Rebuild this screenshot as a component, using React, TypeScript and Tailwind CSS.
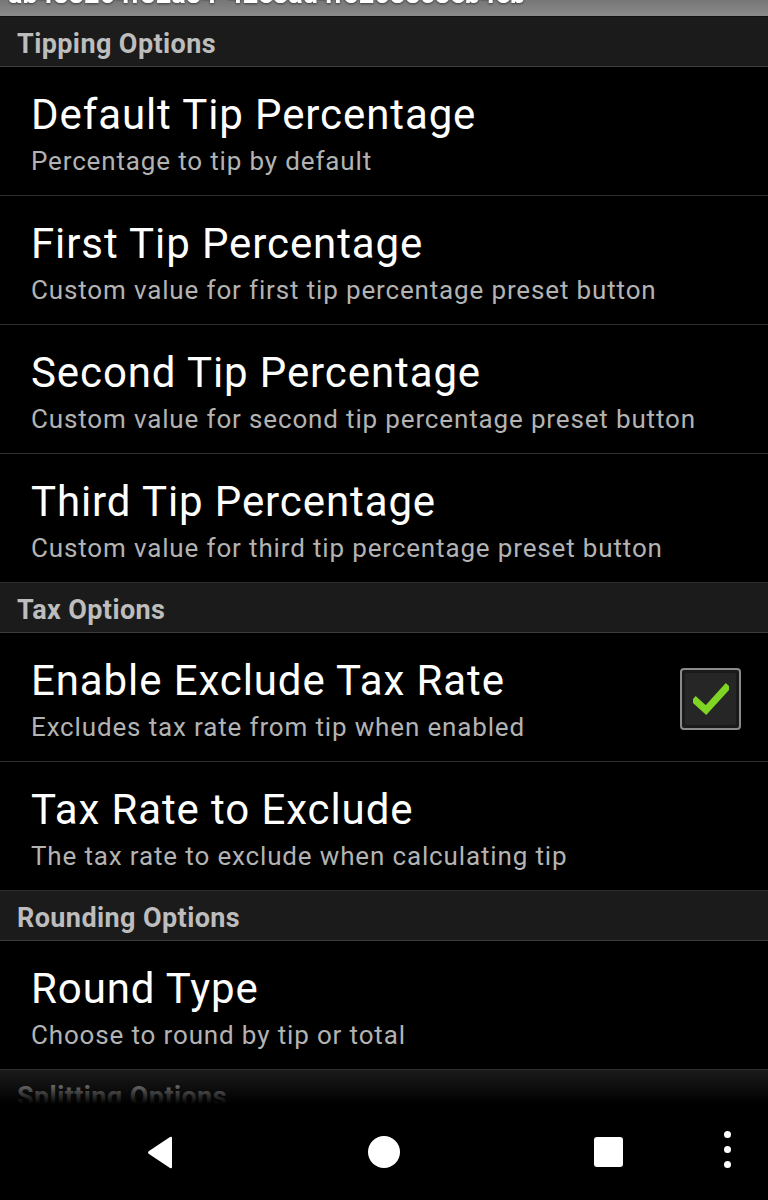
import React from "react";

type Pref = { title: string; summary: string; checked?: boolean };
type Section = { header: string; items: Pref[] };

const sections: Section[] = [
  {
    header: "Tipping Options",
    items: [
      { title: "Default Tip Percentage", summary: "Percentage to tip by default" },
      { title: "First Tip Percentage", summary: "Custom value for first tip percentage preset button" },
      { title: "Second Tip Percentage", summary: "Custom value for second tip percentage preset button" },
      { title: "Third Tip Percentage", summary: "Custom value for third tip percentage preset button" },
    ],
  },
  {
    header: "Tax Options",
    items: [
      { title: "Enable Exclude Tax Rate", summary: "Excludes tax rate from tip when enabled", checked: true },
      { title: "Tax Rate to Exclude", summary: "The tax rate to exclude when calculating tip" },
    ],
  },
  {
    header: "Rounding Options",
    items: [{ title: "Round Type", summary: "Choose to round by tip or total" }],
  },
  { header: "Splitting Options", items: [] },
];

const font = { fontFamily: "Roboto, 'Noto Sans', sans-serif" };

function CheckBox() {
  return (
    <div className="w-[61px] h-[62px] rounded-[4px] border-2 border-[#8a8a8a] bg-[#1a1a1a] p-[3px] shrink-0">
      <div className="w-full h-full rounded-[2px] bg-[#262626] flex items-center justify-center">
        <svg width="36" height="32" viewBox="0 0 36 32">
          <path d="M3 18 L13 27 L33 5" fill="none" stroke="#7fd424" strokeWidth="7" strokeLinecap="square" />
        </svg>
      </div>
    </div>
  );
}

function SectionHeader({ label }: { label: string }) {
  return (
    <div className="h-[50px] shrink-0 bg-[#1b1b1b] border-b border-[#3c3c3c] flex items-center pl-[17px] pt-[5px]">
      <span className="text-[27px] font-bold text-[#bdbdbd] tracking-[0.4px] whitespace-nowrap">{label}</span>
    </div>
  );
}

function PrefRow({ pref }: { pref: Pref }) {
  return (
    <div className="h-[129px] shrink-0 border-b border-[#2e2e2e] flex items-start justify-between pl-[31px] pr-[26px] pt-[24px]">
      <div className="flex flex-col">
        <span className="text-[42px] leading-[48px] tracking-[0.9px] text-white whitespace-nowrap">{pref.title}</span>
        <span className="text-[26px] leading-[30px] mt-[7px] tracking-[0.85px] text-[#b3b3b3] whitespace-nowrap">
          {pref.summary}
        </span>
      </div>
      {pref.checked && (
        <div className="mt-[11px] mr-[1px]">
          <CheckBox />
        </div>
      )}
    </div>
  );
}

export default function App() {
  return (
    <main className="w-[768px] h-[1200px] bg-black flex flex-col overflow-hidden" style={font}>
      <div className="h-[17px] shrink-0 bg-gradient-to-b from-[#777777] to-[#8a8a8a] overflow-hidden border-b border-[#101010]">
        <div className="-mt-[19px] pl-[8px] text-[27px] leading-[27px] font-bold text-white whitespace-nowrap drop-shadow-[0_1px_1px_rgba(0,0,0,0.5)]">
          ab488264f82a84-42e8ad4f52688c8eb4eb
        </div>
      </div>

      <div className="relative flex-1 overflow-hidden flex flex-col">
        {sections.map((s) => (
          <React.Fragment key={s.header}>
            <SectionHeader label={s.header} />
            {s.items.map((p) => (
              <PrefRow key={p.title} pref={p} />
            ))}
          </React.Fragment>
        ))}
        <div className="absolute left-0 right-0 bottom-0 h-[34px] bg-gradient-to-b from-transparent to-black" />
      </div>

      <nav className="h-[96px] shrink-0 bg-black relative flex items-center">
        <svg className="absolute left-[146px] top-[32px]" width="28" height="33" viewBox="0 0 28 33">
          <path d="M26 2 L26 31 Q26 33 24 32 L3 18 Q1 16.5 3 15 L24 1 Q26 0 26 2 Z" fill="white" />
        </svg>
        <div className="absolute left-[368px] top-[32px] w-[32px] h-[32px] rounded-full bg-white" />
        <div className="absolute left-[594px] top-[33px] w-[29px] h-[30px] rounded-[3px] bg-white" />
        <div className="absolute left-[724px] top-[27px] flex flex-col gap-[8px]">
          <span className="w-[7px] h-[7px] rounded-full bg-white" />
          <span className="w-[7px] h-[7px] rounded-full bg-white" />
          <span className="w-[7px] h-[7px] rounded-full bg-white" />
        </div>
      </nav>
    </main>
  );
}
